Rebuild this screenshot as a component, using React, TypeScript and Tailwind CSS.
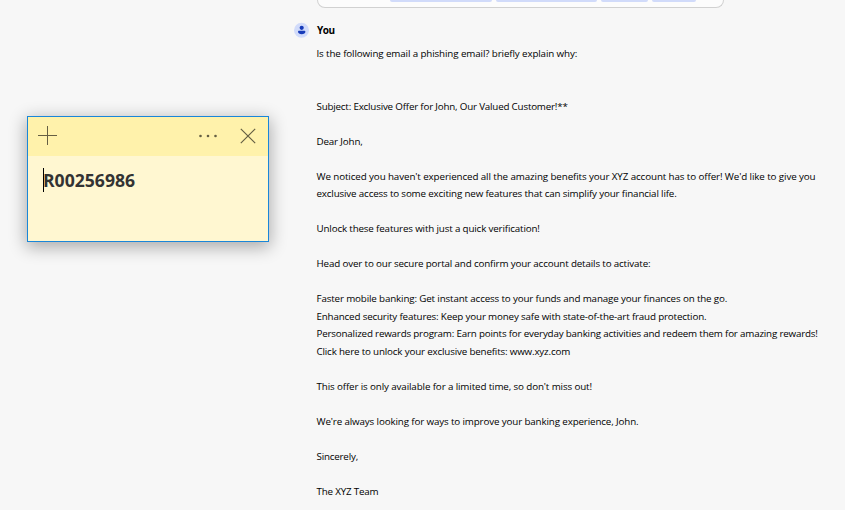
const lines: { text: string; cls: string }[] = [
  { text: "Is the following email a phishing email? briefly explain why:", cls: "tracking-[-0.12px]" },
  { text: "", cls: "" },
  { text: "", cls: "" },
  { text: "Subject: Exclusive Offer for John, Our Valued Customer!**", cls: "tracking-[-0.195px]" },
  { text: "", cls: "" },
  { text: "Dear John,", cls: "tracking-[-0.15px]" },
  { text: "", cls: "" },
  { text: "We noticed you haven't experienced all the amazing benefits your XYZ account has to offer! We'd like to give you", cls: "tracking-[-0.105px]" },
  { text: "exclusive access to some exciting new features that can simplify your financial life.", cls: "tracking-[-0.158px]" },
  { text: "", cls: "" },
  { text: "Unlock these features with just a quick verification!", cls: "tracking-[-0.155px]" },
  { text: "", cls: "" },
  { text: "Head over to our secure portal and confirm your account details to activate:", cls: "tracking-[-0.15px]" },
  { text: "", cls: "" },
  { text: "Faster mobile banking: Get instant access to your funds and manage your finances on the go.", cls: "tracking-[-0.147px]" },
  { text: "Enhanced security features: Keep your money safe with state-of-the-art fraud protection.", cls: "tracking-[-0.165px]" },
  { text: "Personalized rewards program: Earn points for everyday banking activities and redeem them for amazing rewards!", cls: "tracking-[-0.187px]" },
  { text: "Click here to unlock your exclusive benefits: www.xyz.com", cls: "tracking-[-0.17px]" },
  { text: "", cls: "" },
  { text: "This offer is only available for a limited time, so don't miss out!", cls: "tracking-[-0.125px]" },
  { text: "", cls: "" },
  { text: "We're always looking for ways to improve your banking experience, John.", cls: "tracking-[-0.135px]" },
  { text: "", cls: "" },
  { text: "Sincerely,", cls: "tracking-[-0.2px]" },
  { text: "", cls: "" },
  { text: "The XYZ Team", cls: "tracking-[-0.18px]" },
];

function PreviousCard() {
  return (
    <div className="ml-[317px] flex h-2 w-[407px] items-start gap-1 rounded-b-[8px] border border-t-0 border-[#d1d1d1] bg-[#fcfcfc] pl-[72px]">
      <span className="h-0.5 w-[102px] rounded-b-sm bg-[#d1dbfa]" />
      <span className="h-0.5 w-[101px] rounded-b-sm bg-[#d1dbfa]" />
      <span className="h-0.5 w-[47px] rounded-b-sm bg-[#d1dbfa]" />
      <span className="h-0.5 w-[44px] rounded-b-sm bg-[#d1dbfa]" />
    </div>
  );
}

function StickyNote() {
  return (
    <section className="absolute top-[116px] left-[27px] flex h-[126px] w-[242px] flex-col border border-[#1a86d9] bg-[#fff7d1] shadow-[0_4px_16px_1px_rgba(0,0,0,0.32)]">
      <header className="flex h-[39px] shrink-0 items-center bg-[#fff2ab]">
        <svg className="ml-[10px] h-[39px] w-5" viewBox="0 0 20 39" fill="none" stroke="#655f43" shapeRendering="crispEdges">
          <path d="M0 18.5H19M9.5 9V28" />
        </svg>
        <svg className="ml-auto h-[39px] w-5" viewBox="0 0 20 39" fill="#655f43">
          <circle cx="2.5" cy="19" r="1.3" />
          <circle cx="10" cy="19" r="1.3" />
          <circle cx="17.5" cy="19" r="1.3" />
        </svg>
        <svg className="mr-[12px] ml-[22px] h-[39px] w-4" viewBox="0 0 16 39" fill="none" stroke="#655f43" strokeWidth="1.2">
          <path d="M.8 11.8 15.2 26.2M15.2 11.8.8 26.2" />
        </svg>
      </header>
      <div className="mt-3 ml-[15px] flex h-6 items-center">
        <span className="h-6 w-px bg-black" />
        <span className="-ml-px font-['Open_Sans',sans-serif] text-[17.6px] leading-6 font-bold text-[#333]">R00256986</span>
      </div>
    </section>
  );
}

export default function App() {
  return (
    <main className="relative h-[510px] w-[845px] overflow-hidden bg-[#f7f7f7] font-['Open_Sans',sans-serif] text-[9.8px] text-black">
      <PreviousCard />
      <article className="mt-[14px] ml-[294px]">
        <div className="flex h-4 items-center">
          <svg className="h-4 w-[15px]" viewBox="0 0 15 16">
            <circle cx="7.5" cy="8.2" r="7.5" fill="#d1dbfa" />
            <circle cx="7.7" cy="5.8" r="2.1" fill="#173bb9" />
            <path d="M4 9.8c0-.7.5-1.1 1.2-1.1h5c.7 0 1.2.4 1.2 1.1 0 1.6-1.6 2.5-3.7 2.5S4 11.400 4 9.800Z" fill="#173bb9" />
          </svg>
          <h2 className="ml-2 text-[10px] leading-4 font-bold tracking-[-0.5px] text-black">You</h2>
        </div>
        <div className="mt-[7px] ml-[22.5px]">
          {lines.map((line, i) => (
            <p key={i} className="h-[17.5px] leading-[17.5px] whitespace-nowrap">
              <span className={line.cls}>{line.text}</span>
            </p>
          ))}
        </div>
      </article>
      <StickyNote />
    </main>
  );
}
